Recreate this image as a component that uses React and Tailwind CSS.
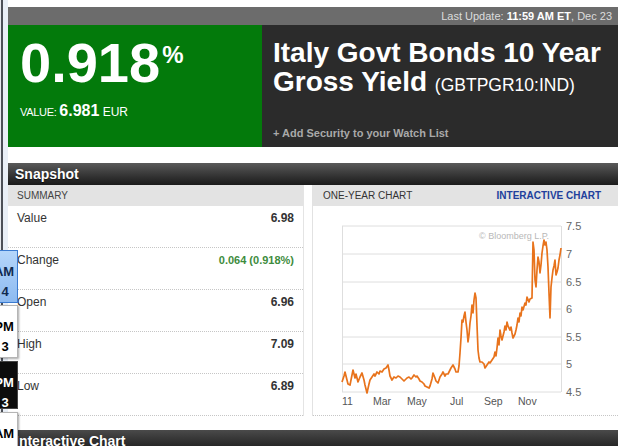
import React from "react";

const rows = [
  { label: "Value", value: "6.98" },
  { label: "Change", value: "0.064 (0.918%)", up: true },
  { label: "Open", value: "6.96" },
  { label: "High", value: "7.09" },
  { label: "Low", value: "6.89" },
];

// Yield history, plotted in page coordinates (translated into the chart box)
const pts = [
  [342,382],[344,376],[345,372],[347,380],[348,384],[350,385],[352,375],[353,370],[355,378],[356,374],[358,382],[360,377],[362,373],[364,380],[365,385],[367,393],[369,384],[370,380],[372,377],[374,374],[375,376],[377,372],[379,374],[380,371],[382,372],[384,369],[386,368],[388,365],[389,370],[390,376],[392,380],[394,377],[396,378],[398,376],[400,377],[402,379],[404,381],[405,380],[407,378],[409,377],[411,379],[412,378],[414,375],[416,377],[417,376],[419,379],[420,381],[422,382],[424,384],[425,386],[427,387],[429,388],[430,386],[432,379],[433,373],[435,378],[436,381],[438,383],[440,377],[442,374],[443,372],[445,376],[446,374],[448,374],[450,370],[451,368],[453,365],[455,369],[456,372],[458,372],[459,366],[460,353],[461,338],[462,320],[463,322],[464,316],[465,312],[466,322],[467,330],[468,342],[469,335],[470,323],[471,316],[472,305],[473,313],[474,300],[475,293],[476,298],[477,325],[478,350],[479,358],[480,362],[482,362],[484,364],[485,368],[487,365],[489,362],[490,363],[492,360],[494,357],[495,352],[496,356],[497,348],[498,338],[499,345],[500,330],[501,336],[502,340],[504,332],[505,326],[506,330],[507,322],[508,326],[510,330],[511,327],[512,333],[513,338],[515,334],[516,330],[517,325],[518,318],[519,322],[520,313],[521,316],[522,307],[523,310],[525,303],[526,305],[527,297],[529,302],[530,299],[532,298],[533,242],[534,250],[535,280],[536,287],[537,270],[538,257],[539,262],[540,273],[541,265],[542,253],[543,246],[544,240],[545,245],[546,242],[547,250],[548,267],[549,293],[550,318],[551,287],[552,278],[553,270],[554,266],[555,260],[556,275],[557,272],[558,268],[559,260],[560,255],[561,248]
];

const gridY = [
  [226, "7.5"],
  [254, "7"],
  [282, "6.5"],
  [309, "6"],
  [337, "5.5"],
  [364, "5"],
  [392, "4.5"],
];

const months = [
  [342, "11"],
  [373, "Mar"],
  [407, "May"],
  [450, "Jul"],
  [484, "Sep"],
  [518, "Nov"],
];

function YieldChart() {
  return (
    <svg width="305" height="209" viewBox="0 0 305 209" className="block">
      <g transform="translate(-313,-206)">
        {gridY.map(([y, t]) => (
          <g key={t}>
            <line x1="342" x2="561" y1={y} y2={y} stroke="#dedede" strokeWidth="1" />
            <text x="566" y={y + 4} fontSize="11" fill="#666" fontFamily="Liberation Sans, Arial, sans-serif">{t}</text>
          </g>
        ))}
        <line x1="342.5" x2="342.5" y1="226" y2="392" stroke="#dedede" />
        <line x1="561.5" x2="561.5" y1="226" y2="392" stroke="#dedede" />
        {months.map(([x, t]) => (
          <text key={t} x={x} y="405" fontSize="10.5" fill="#555" fontFamily="Liberation Sans, Arial, sans-serif">{t}</text>
        ))}
        <text x="479" y="239" fontSize="9" fill="#b8b8b8" fontFamily="Liberation Sans, Arial, sans-serif">© Bloomberg L.P.</text>
        <polyline
          points={pts.map((p) => p.join(",")).join(" ")}
          fill="none"
          stroke="#e8731c"
          strokeWidth="1.7"
          strokeLinejoin="round"
        />
      </g>
    </svg>
  );
}

function SideTab({ top, height, line1, line2, variant }) {
  const styles = {
    blue: "bg-gradient-to-b from-[#b5d6fa] to-[#8dbaf0] border border-[#3b7bd0] text-[#102a50]",
    white: "bg-white border border-[#b5b5b5] shadow-[1px_1px_2px_rgba(0,0,0,0.35)] text-black",
    black: "bg-[#0c0c0c] border border-[#444] text-white",
  };
  return (
    <div
      className={`absolute left-[-10px] w-[28px] flex flex-col items-center font-bold text-[13px] leading-[20px] ${styles[variant]}`}
      style={{ top, height }}
    >
      <div className="pt-[11px]">{line1}</div>
      <div className="pl-[2px]">{line2}</div>
    </div>
  );
}

export default function App() {
  return (
    <div className="relative w-[625px] h-[446px] overflow-hidden bg-white flex items-start font-['Liberation_Sans',Arial,sans-serif]">
      {/* window edge */}
      <div className="flex shrink-0 w-[8px] self-stretch">
        <div className="w-[1px] bg-[#e6e9ee]" />
        <div className="w-[2px] bg-[#4c5058]" />
        <div className="w-[5px] bg-[#e9eff7]" />
      </div>

      <div className="w-[610px] shrink-0 flex flex-col pt-[7px]">
        {/* update bar */}
        <div className="h-[18px] shrink-0 bg-[#6c6c6c] flex items-center justify-end pr-[6px] text-[11px] text-[#dcdcdc]">
          <span>Last Update:&nbsp;</span>
          <span className="font-bold text-white">11:59 AM ET</span>
          <span>, Dec 23</span>
        </div>

        {/* quote hero */}
        <div className="h-[122px] shrink-0 flex">
          <div className="w-[254px] bg-[#037a0b] text-white pl-[12px] pt-[10px]">
            <div className="flex items-start">
              <span className="text-[56px] font-bold leading-[56px]">0.918</span>
              <span className="text-[24px] font-bold leading-[24px] mt-[8px] ml-[2px]">%</span>
            </div>
            <div className="mt-[11px] flex items-baseline leading-[18px]">
              <span className="text-[11px] tracking-[-0.3px]">VALUE:&nbsp;</span>
              <span className="text-[16px] font-bold">6.981</span>
              <span className="text-[12px]">&nbsp;EUR</span>
            </div>
          </div>
          <div className="flex-1 bg-[#2b2b2b] text-white pl-[11px] pt-[13px] flex flex-col">
            <div className="text-[28px] font-bold leading-[29px]">
              Italy Govt Bonds 10 Year
              <br />
              Gross Yield <span className="text-[17.5px] font-normal">(GBTPGR10:IND)</span>
            </div>
            <div className="mt-[25px] text-[11px] font-bold text-[#a9a9a9]">+ Add Security to your Watch List</div>
          </div>
        </div>

        {/* snapshot */}
        <div className="mt-[16px] h-[22px] shrink-0 bg-gradient-to-b from-[#5a5a5a] to-[#1b1b1b] text-white text-[14px] font-bold flex items-center pl-[7px] [text-shadow:0_1px_1px_rgba(0,0,0,0.6)]">
          Snapshot
        </div>

        <div className="flex gap-[8px] shrink-0">
          <div className="w-[296px] border-r border-[#e4e4e4]">
            <div className="h-[21px] bg-[#e3e3e3] flex items-center pl-[9px] text-[10px] text-[#444]">SUMMARY</div>
            {rows.map((r) => (
              <div
                key={r.label}
                className="h-[42px] border-b border-dotted border-[#c6c6c6] flex justify-between items-start pt-[5px] pl-[9px] pr-[9px] text-[12px] leading-[14px]"
              >
                <span className="text-[#333]">{r.label}</span>
                <span className={r.up ? "font-bold text-[11px] text-[#3d8c3d]" : "font-bold text-[#333]"}>{r.value}</span>
              </div>
            ))}
          </div>

          <div className="w-[306px] border-l border-[#e2e2e2] flex flex-col">
            <div className="h-[21px] bg-[#e3e3e3] flex items-center justify-between pl-[10px] pr-[17px] text-[10px]">
              <span className="text-[#333]">ONE-YEAR CHART</span>
              <span className="font-bold text-[#213f9c]">INTERACTIVE CHART</span>
            </div>
            <div className="h-[210px] border-b border-dotted border-[#c6c6c6]">
              <YieldChart />
            </div>
          </div>
        </div>

        <div className="mt-[14px] h-[22px] shrink-0 bg-gradient-to-b from-[#4a4a4a] to-[#1b1b1b] text-white text-[14px] font-bold flex items-center pl-[7px] [text-shadow:0_1px_1px_rgba(0,0,0,0.6)]">
          Interactive Chart
        </div>
      </div>

      {/* overlapping side tabs */}
      <SideTab top={250} height={53} line1="AM" line2="4" variant="blue" />
      <SideTab top={305} height={53} line1="PM" line2="3" variant="white" />
      <SideTab top={361} height={48} line1="PM" line2="3" variant="black" />
      <SideTab top={412} height={50} line1="AM" line2="0" variant="white" />
    </div>
  );
}
